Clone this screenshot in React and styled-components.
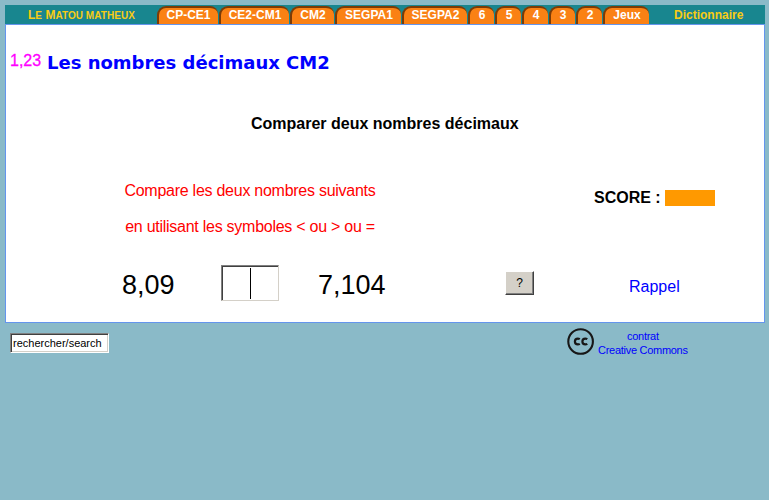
import React from "react";
import styled, { createGlobalStyle } from "styled-components";

const GlobalStyle = createGlobalStyle`
  * { box-sizing: border-box; }
  body {
    margin: 0;
    background: #8abac8;
    font-family: "Liberation Sans", Arial, sans-serif;
    color: #000;
  }
  a { color: #0000ff; text-decoration: none; }
`;

const Page = styled.div`
  width: 769px;
  height: 500px;
  padding: 5px 4px 0 5px;
  overflow: hidden;
`;

const Nav = styled.nav`
  display: flex;
  height: 19px;
  background: #18868f;
  font-size: 12px;
  line-height: 19px;
  font-weight: bold;
`;

const NavLink = styled.a`
  && { color: #f8cc14; }
  flex: none;
  width: ${(p) => p.$width}px;
  padding-left: ${(p) => p.$indent}px;
  line-height: 20px;
  white-space: nowrap;
`;

const SmallCaps = styled.span`
  font-size: 10px;
  text-transform: uppercase;
  letter-spacing: 0.05px;
`;

const Tab = styled.a`
  && { color: #fff; }
  flex: none;
  width: ${(p) => p.$width}px;
  height: 18px;
  margin: 1px 1px 0 0;
  border: solid #7c3b06;
  border-width: 2px 0 0 2px;
  border-radius: 9px 8px 0 0;
  background: #fa8114;
  text-align: center;
  line-height: 14px;
`;

const Panel = styled.main`
  height: 299px;
  border: 1px solid #6495ed;
  background: #fff;
`;

const Title = styled.h1`
  display: flex;
  height: 37px;
  margin: 19px 0 0 4px;
  color: #0000ff;
  font: bold 18px/37px "DejaVu Sans", Verdana, sans-serif;
  white-space: nowrap;
`;

const Badge = styled.span`
  width: 37px;
  color: #ff00ff;
  font: 16px/33px "Liberation Sans", Arial, sans-serif;
  -webkit-text-stroke: 0.3px #ff00ff;
`;

const Subtitle = styled.h2`
  height: 24px;
  margin: 31px 0 0 245px;
  font-size: 16px;
  line-height: 24px;
  white-space: nowrap;
`;

const Prompt = styled.div`
  display: flex;
  height: 72px;
  margin-top: 37px;
`;

const Instructions = styled.div`
  width: 488px;
  text-align: center;
  color: #ff0000;
  font-size: 16px;
  line-height: 36px;
  letter-spacing: -0.26px;
`;

const Score = styled.div`
  display: flex;
  height: 18px;
  margin: 16px 0 0 100px;
  font-size: 16px;
  line-height: 18px;
  font-weight: bold;
  white-space: nowrap;
`;

const ScoreBar = styled.div`
  width: 50px;
  height: 16px;
  margin: 1px 0 0 4px;
  background: #ff9900;
`;

const Exercise = styled.div`
  display: flex;
  height: 36px;
  margin-top: 20px;
`;

const NumberValue = styled.div`
  width: ${(p) => p.$width}px;
  margin-left: ${(p) => p.$indent}px;
  font-size: 27px;
  line-height: 41px;
  white-space: nowrap;
`;

const Answer = styled.div`
  display: flex;
  justify-content: center;
  width: 58px;
  height: 36px;
  border: solid;
  border-width: 1px;
  border-color: #808080 #d4d0c8 #d4d0c8 #808080;
  box-shadow: inset 1px 1px #404040;
  padding: 2px 0 1px 1px;
`;

const Caret = styled.span`
  width: 1px;
  height: 31px;
  background: #000;
`;

const HelpButton = styled.button`
  width: 29px;
  height: 24px;
  margin: 6px 0 0 119px;
  padding: 0;
  border: solid;
  border-width: 1px;
  border-color: #fff #404040 #404040 #fff;
  border-radius: 0;
  box-shadow: inset -1px -1px #808080;
  background: #d4d0c8;
  color: #000;
  font: 12px/20px "Liberation Sans", Arial, sans-serif;
`;

const Reminder = styled.a`
  margin-left: 95px;
  font-size: 16px;
  line-height: 43px;
`;

const Footer = styled.footer`
  display: flex;
`;

const Search = styled.div`
  width: 99px;
  height: 20px;
  margin: 10px 0 0 5px;
  padding-left: 2px;
  border: solid;
  border-width: 1px;
  border-color: #808080 #fff #fff #808080;
  box-shadow: inset 1px 1px #404040, inset -1px -1px #d4d0c8;
  background: #fff;
  font: 11px/19px "Liberation Sans", Arial, sans-serif;
  white-space: nowrap;
`;

const License = styled.div`
  display: flex;
  margin: 5px 0 0 458px;
`;

const LicenseText = styled.a`
  margin: 1px 0 0 3px;
  text-align: center;
  font-size: 11px;
  line-height: 14px;
  letter-spacing: -0.28px;
  white-space: nowrap;
`;

const tabs = [
  ["CP-CE1", 61], ["CE2-CM1", 70], ["CM2", 44], ["SEGPA1", 66], ["SEGPA2", 65],
  ["6", 26], ["5", 26], ["4", 26], ["3", 26], ["2", 26], ["Jeux", 46],
];

function CreativeCommons() {
  return (
    <svg width="28" height="28" viewBox="0 0 28 28" fill="none" stroke="#171717">
      <circle cx="13.6" cy="13.5" r="12.3" strokeWidth="2.1" />
      <g strokeWidth="2.2">
        <path d="M12.8 11.2Q11.9 10.6 10.8 10.6A2.9 2.9 0 0 0 10.8 16.4Q11.9 16.4 12.8 15.8" />
        <path d="M20.3 11.2Q19.4 10.6 18.3 10.6A2.9 2.9 0 0 0 18.3 16.4Q19.4 16.4 20.3 15.8" />
      </g>
    </svg>
  );
}

export default function App() {
  return (
    <>
      <GlobalStyle />
      <Page>
        <Nav>
          <NavLink $width={152} $indent={23}>
            L<SmallCaps>e</SmallCaps> M<SmallCaps>atou matheux</SmallCaps>
          </NavLink>
          {tabs.map(([label, width]) => (
            <Tab key={label} $width={width}>{label}</Tab>
          ))}
          <NavLink $width={101} $indent={24}>Dictionnaire</NavLink>
        </Nav>
        <Panel>
          <Title><Badge>1,23</Badge>Les nombres décimaux CM2</Title>
          <Subtitle>Comparer deux nombres décimaux</Subtitle>
          <Prompt>
            <Instructions>
              <div>Compare les deux nombres suivants</div>
              <div>en utilisant les symboles &lt; ou &gt; ou =</div>
            </Instructions>
            <Score>SCORE :<ScoreBar /></Score>
          </Prompt>
          <Exercise>
            <NumberValue $indent={116} $width={99}>8,09</NumberValue>
            <Answer><Caret /></Answer>
            <NumberValue $indent={39} $width={68}>7,104</NumberValue>
            <HelpButton>?</HelpButton>
            <Reminder>Rappel</Reminder>
          </Exercise>
        </Panel>
        <Footer>
          <Search>rechercher/search</Search>
          <License>
            <CreativeCommons />
            <LicenseText>contrat<br />Creative Commons</LicenseText>
          </License>
        </Footer>
      </Page>
    </>
  );
}
